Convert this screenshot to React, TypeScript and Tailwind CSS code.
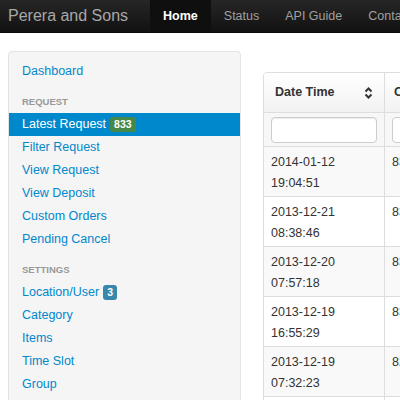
import React from 'react';

const REQUEST_LINKS = ['Filter Request', 'View Request', 'View Deposit', 'Custom Orders', 'Pending Cancel'];
const SETTINGS_LINKS = ['Category', 'Items', 'Time Slot', 'Group'];

const ROWS = [
  { date: '2014-01-12', time: '19:04:51', id: '833' },
  { date: '2013-12-21', time: '08:38:46', id: '832' },
  { date: '2013-12-20', time: '07:57:18', id: '831' },
  { date: '2013-12-19', time: '16:55:29', id: '830' },
  { date: '2013-12-19', time: '07:32:23', id: '829' },
  { date: '2013-12-18', time: '11:20:05', id: '828' },
];

const NavItem = ({ label, active }: { label: string; active?: boolean }) => (
  <div
    className={`h-full flex items-center px-[13px] ${
      active ? 'bg-[#0f0f0f] text-white font-bold' : 'text-[#a0a0a0]'
    }`}
  >
    {label}
  </div>
);

const SortIcon = () => (
  <svg width="9" height="12" viewBox="0 0 9 12" aria-hidden="true">
    <path d="M1.5 4.5 L4.5 1.5 L7.5 4.5" stroke="#333" strokeWidth="2" fill="none" />
    <path d="M1.5 7.5 L4.5 10.5 L7.5 7.5" stroke="#333" strokeWidth="2" fill="none" />
  </svg>
);

export default function App() {
  return (
    <div
      className="w-[400px] h-[400px] overflow-hidden bg-white text-[#333] text-[12.5px]"
      style={{ fontFamily: '"Liberation Sans", Arial, sans-serif' }}
    >
      {/* Navbar */}
      <div className="h-[33px] bg-gradient-to-b from-[#262626] to-[#121212] border-b border-[#0a0a0a] flex items-stretch whitespace-nowrap">
        <div className="flex items-center pl-[8px] pr-[22px] text-[16px] text-[#a8a8a8]">Perera and Sons</div>
        <NavItem label="Home" active />
        <NavItem label="Status" />
        <NavItem label="API Guide" />
        <NavItem label="Contact" />
      </div>

      <div className="flex items-start pl-[8px] pt-[18px] gap-[22px]">
        {/* Sidebar */}
        <div className="w-[233px] shrink-0 bg-[#f5f5f5] border border-[#e3e3e3] rounded-[4px] pt-[8px] pb-[10px]">
          <div className="h-[23px] leading-[23px] pl-[13px] text-[#0088cc]">Dashboard</div>

          <div className="pt-[7px] h-[30px] leading-[23px] pl-[13px] text-[9.5px] font-bold text-[#999] uppercase">Request</div>
          <div className="h-[23px] flex items-center pl-[13px] bg-[#0088cc] text-white">
            Latest Request
            <span className="ml-[4px] px-[4px] h-[15px] leading-[15px] rounded-[3px] bg-[#468847] text-[10.5px] font-bold">833</span>
          </div>
          {REQUEST_LINKS.map((l) => (
            <div key={l} className="h-[23px] leading-[23px] pl-[13px] text-[#0088cc]">{l}</div>
          ))}

          <div className="pt-[7px] h-[30px] leading-[23px] pl-[13px] text-[9.5px] font-bold text-[#999] uppercase">Settings</div>
          <div className="h-[23px] flex items-center pl-[13px] text-[#0088cc]">
            Location/User
            <span className="ml-[4px] px-[4px] h-[15px] leading-[15px] rounded-[3px] bg-[#3a87ad] text-white text-[10.5px] font-bold">3</span>
          </div>
          {SETTINGS_LINKS.map((l) => (
            <div key={l} className="h-[23px] leading-[23px] pl-[13px] text-[#0088cc]">{l}</div>
          ))}
        </div>

        {/* Table */}
        <div className="mt-[21px] w-[260px] shrink-0 border border-[#dddddd] rounded-[4px] overflow-hidden">
          <div className="flex h-[40px] bg-gradient-to-b from-white to-[#f2f2f2] border-b border-[#dddddd] font-bold">
            <div className="w-[121px] flex items-center justify-between pl-[11px] pr-[11px] border-r border-[#dddddd]">
              Date Time
              <SortIcon />
            </div>
            <div className="flex-1 flex items-center pl-[9px]">Customer</div>
          </div>
          <div className="flex h-[34px] bg-[#f7f7f7] border-b border-[#dddddd]">
            <div className="w-[121px] flex items-center px-[7px] border-r border-[#dddddd]">
              <div className="w-full h-[26px] bg-white border border-[#cccccc] rounded-[4px] shadow-[inset_0_1px_1px_rgba(0,0,0,0.075)]" />
            </div>
            <div className="flex-1 flex items-center pl-[7px]">
              <div className="w-full h-[26px] bg-white border border-[#cccccc] rounded-[4px]" />
            </div>
          </div>
          {ROWS.map((r, i) => (
            <div
              key={r.date + r.time}
              className={`flex h-[50px] border-b border-[#dddddd] ${i % 2 === 0 ? 'bg-[#f9f9f9]' : 'bg-white'}`}
            >
              <div className="w-[121px] pl-[7px] pt-[5px] leading-[21px] border-r border-[#dddddd]">
                <div>{r.date}</div>
                <div>{r.time}</div>
              </div>
              <div className="flex-1 pl-[7px] pt-[5px] leading-[21px]">{r.id}</div>
            </div>
          ))}
        </div>
      </div>
    </div>
  );
}
